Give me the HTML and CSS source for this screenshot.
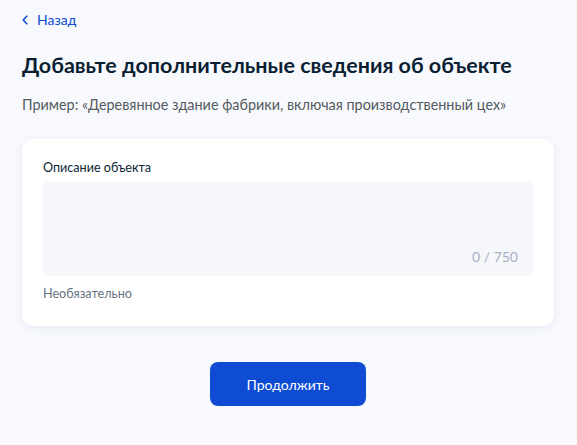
FILE: index.html
```html
<!DOCTYPE html>
<html lang="ru">
<head>
    <meta charset="UTF-8">
    <meta name="viewport" content="width=device-width, initial-scale=1.0">
    <title>Дополнительные сведения</title>
    <link rel="stylesheet" href="styles.css">
</head>
<body>
    <div id="main-container">
        <a class="back-link" href="#">
            <svg width="6" height="10" viewBox="0 0 6 10"><path d="M4.8 1.2L1.2 5l3.6 3.8" fill="none" stroke="#0d4cd3" stroke-width="1.6" stroke-linecap="round" stroke-linejoin="round"/></svg>
            <span>Назад</span>
        </a>

        <h1>Добавьте дополнительные сведения об объекте</h1>
        <p class="hint">Пример: «Деревянное здание фабрики, включая производственный цех»</p>

        <div class="card">
            <label class="field-label" for="description">Описание объекта</label>
            <div class="textarea-wrap">
                <textarea id="description" maxlength="750"></textarea>
                <span class="counter">0 / 750</span>
            </div>
            <div class="field-note">Необязательно</div>
        </div>

        <div class="actions">
            <button>Продолжить</button>
        </div>
    </div>
</body>
</html>
```

FILE: styles.css
```css
body {
    font-family: Lato, "Noto Sans", sans-serif;
    margin: 0;
    background-color: #f8f9fd;
    color: #0b1f33;
}
#main-container {
    padding: 9px 23px 0 22px;
}
.back-link {
    display: inline-flex;
    align-items: center;
    gap: 9px;
    color: #0d4cd3;
    text-decoration: none;
    font-size: 14px;
    line-height: 18px;
}
h1 {
    font-size: 21.5px;
    font-weight: 700;
    line-height: 28px;
    margin: 22px 0 0;
}
.hint {
    font-size: 14.4px;
    line-height: 20px;
    color: #535b63;
    margin: 16px 0 0;
}
.card {
    background-color: white;
    border-radius: 12px;
    box-shadow: 0 2px 8px rgba(30, 70, 150, 0.08);
    margin-top: 24px;
    padding: 20px 21px 24px;
}
.field-label {
    display: block;
    font-size: 12.6px;
    line-height: 18px;
    margin-bottom: 5px;
}
.textarea-wrap {
    position: relative;
}
textarea {
    display: block;
    width: 100%;
    height: 94px;
    box-sizing: border-box;
    border: none;
    border-radius: 4px;
    background-color: #f5f7fa;
    resize: none;
    font-family: inherit;
    font-size: 14px;
    padding: 10px 16px;
}
.counter {
    position: absolute;
    right: 15px;
    bottom: 11px;
    font-size: 14px;
    color: #a5b0c5;
}
.field-note {
    font-size: 12.6px;
    line-height: 16px;
    color: #66727f;
    margin-top: 10px;
}
.actions {
    display: flex;
    justify-content: center;
    margin-top: 36px;
}
button {
    width: 156px;
    height: 44px;
    background-color: #0d4cd3;
    color: white;
    border: none;
    border-radius: 8px;
    font-family: inherit;
    font-size: 14px;
    cursor: pointer;
}
```
